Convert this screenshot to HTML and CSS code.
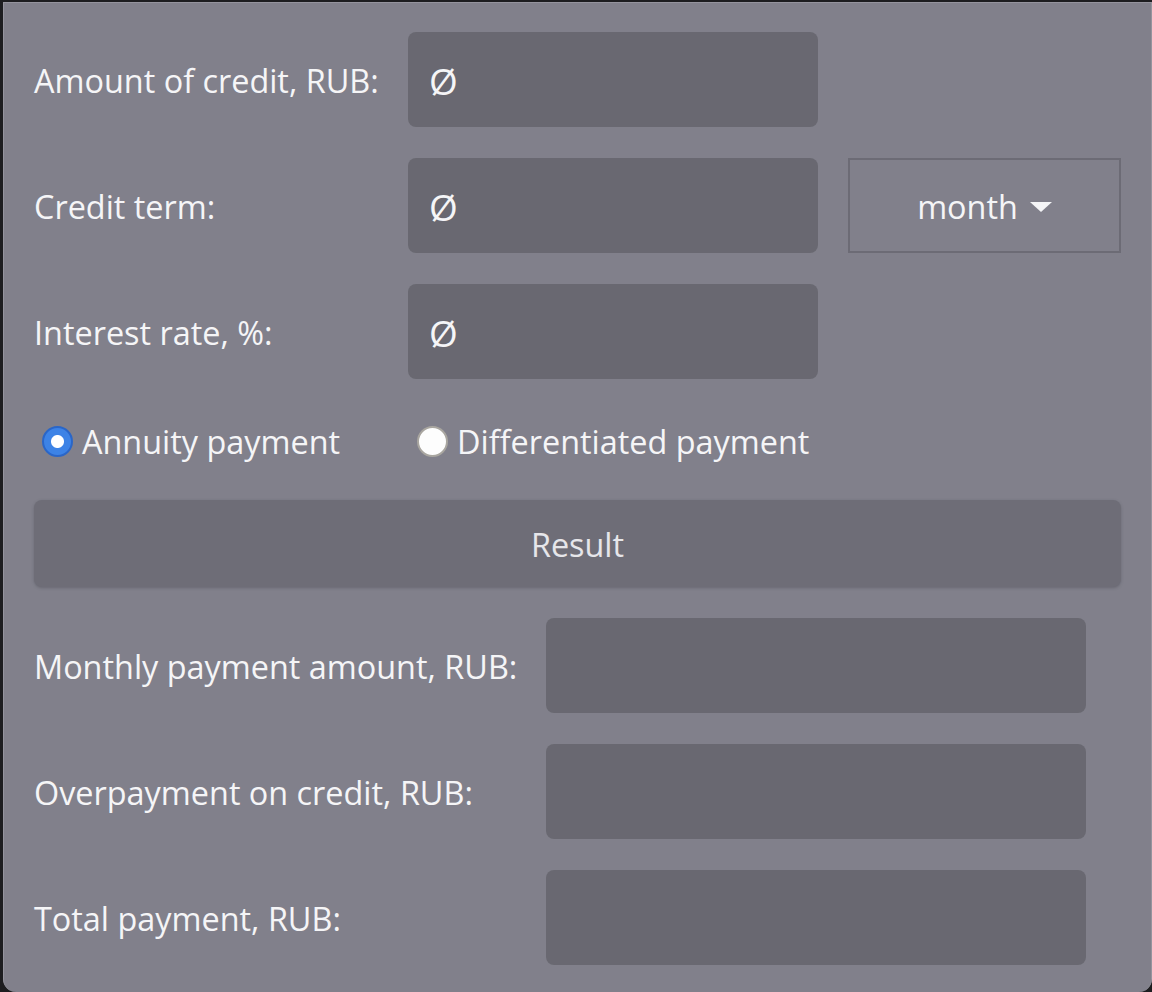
FILE: index.html
```html
<!DOCTYPE html>
<html>
<head>
<meta charset="utf-8">
<link rel="stylesheet" href="styles.css">
</head>
<body>
<div class="window">
  <div class="form">
    <div class="row">
      <label class="label label-in">Amount of credit, RUB:</label>
      <div class="field in"><span class="empty">Ø</span></div>
    </div>
    <div class="row">
      <label class="label label-in">Credit term:</label>
      <div class="field in"><span class="empty">Ø</span></div>
      <div class="select">month<span class="arrow"></span></div>
    </div>
    <div class="row">
      <label class="label label-in">Interest rate, %:</label>
      <div class="field in"><span class="empty">Ø</span></div>
    </div>
  </div>
  <div class="radios">
    <div class="radio-item checked"><span class="radio"></span><span>Annuity payment</span></div>
    <div class="radio-item"><span class="radio"></span><span>Differentiated payment</span></div>
  </div>
  <div class="result-btn">Result</div>
  <div class="form results">
    <div class="row">
      <label class="label label-out">Monthly payment amount, RUB:</label>
      <div class="field out"></div>
    </div>
    <div class="row">
      <label class="label label-out">Overpayment on credit, RUB:</label>
      <div class="field out"></div>
    </div>
    <div class="row">
      <label class="label label-out">Total payment, RUB:</label>
      <div class="field out"></div>
    </div>
  </div>
</div>
</body>
</html>
```
FILE: styles.css
```css
html, body {
  margin: 0;
  padding: 0;
}
body {
  background: #1d1d20;
  width: 1152px;
  height: 992px;
  overflow: hidden;
  font-family: "Open Sans", "Noto Sans", sans-serif;
  color: #f5f5f7;
  font-size: 32.4px;
}
.window {
  margin: 2px 0 0 3px;
  width: 1149px;
  height: 990px;
  box-sizing: border-box;
  background: #81808b;
  border: 1px solid #95949e;
  border-bottom: none;
  border-radius: 0 0 13px 13px;
  padding: 29px 30px 0 30px;
}
.form {
  display: flex;
  flex-direction: column;
  gap: 31px;
}
.row {
  display: flex;
  align-items: center;
  height: 95px;
}
.label {
  display: block;
  padding-left: 0;
}
.label-in {
  width: 374px;
}
.label-out {
  width: 512px;
}
.field {
  height: 95px;
  box-sizing: border-box;
  background: #696871;
  border-radius: 8px;
  display: flex;
  align-items: center;
  padding-left: 21px;
}
.empty {
  font-size: 37px;
  line-height: 1;
  margin-top: 2px;
}
.field.in {
  width: 410px;
}
.field.out {
  width: 540px;
}
.select {
  margin-left: 30px;
  width: 273px;
  height: 95px;
  box-sizing: border-box;
  border: 2px solid #6c6b75;
  display: flex;
  align-items: center;
  justify-content: center;
  gap: 12px;
}
.arrow {
  width: 0;
  height: 0;
  border-left: 11px solid transparent;
  border-right: 11px solid transparent;
  border-top: 10px solid #f5f5f7;
  margin-top: 2px;
}
.radios {
  display: flex;
  align-items: center;
  height: 34px;
  margin-top: 45px;
  padding-left: 8px;
}
.radio-item {
  display: flex;
  align-items: center;
  gap: 9px;
}
.radio-item + .radio-item {
  margin-left: 77px;
}
.radio {
  width: 31px;
  height: 31px;
  box-sizing: border-box;
  border-radius: 50%;
  background: #fdfdfd;
  border: 2px solid #a9a6a0;
  display: inline-block;
  flex: none;
}
.checked .radio {
  border: 2px solid #2a66c8;
  background: radial-gradient(circle, #ffffff 0 6px, #3d83e6 7px);
}
.result-btn {
  margin-top: 42px;
  height: 87px;
  background: #6e6d77;
  border-radius: 8px;
  box-shadow: 0 1px 3px rgba(60, 60, 70, 0.35);
  display: flex;
  align-items: center;
  justify-content: center;
  color: #e6e6ea;
}
.results {
  margin-top: 31px;
}
```
